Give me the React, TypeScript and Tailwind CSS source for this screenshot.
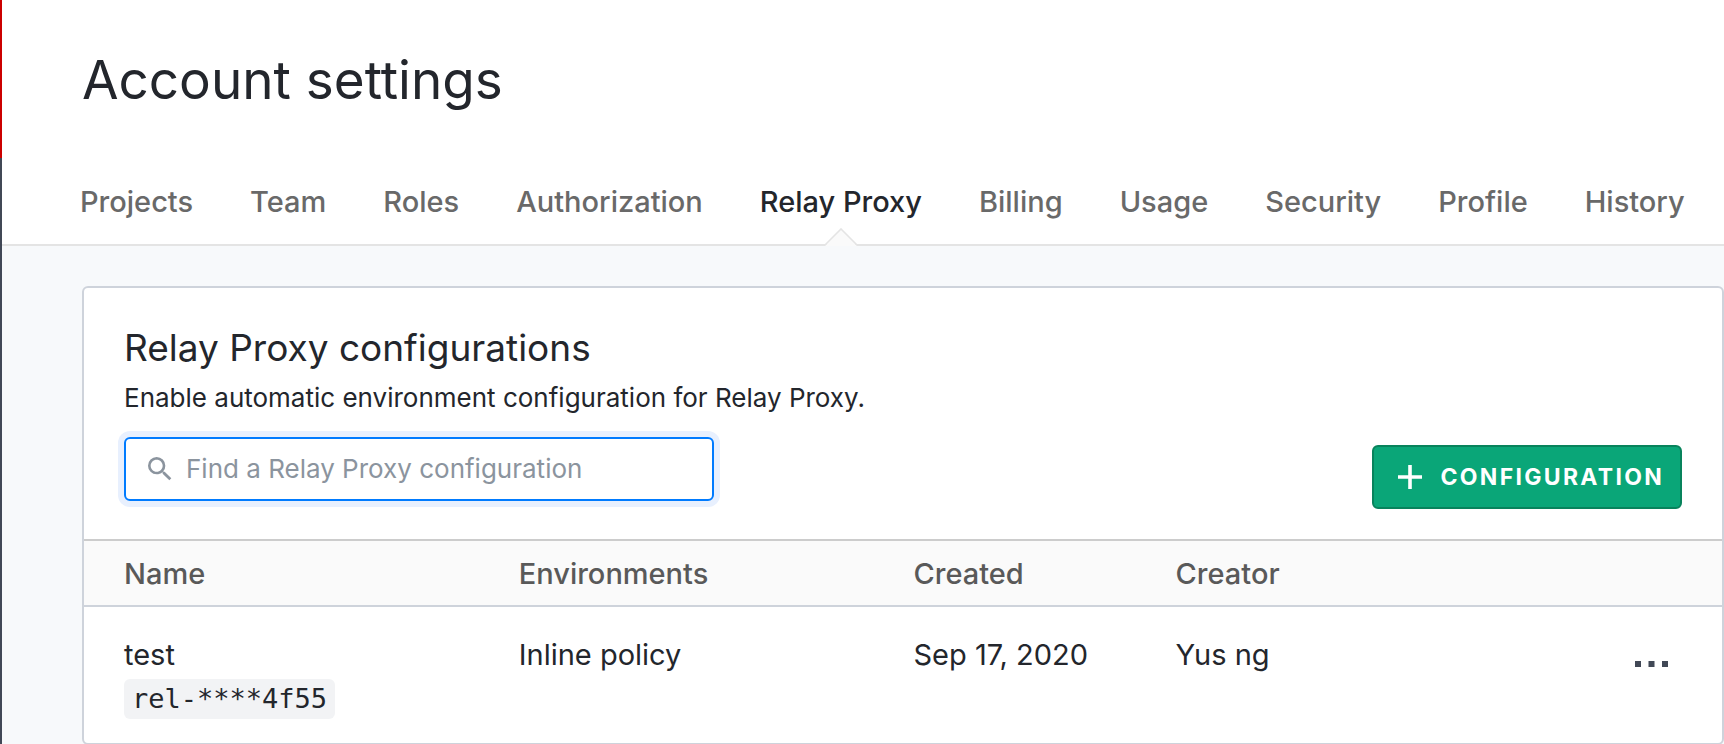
import { MdSearch } from "react-icons/md";

const tabs = [
  "Projects",
  "Team",
  "Roles",
  "Authorization",
  "Relay Proxy",
  "Billing",
  "Usage",
  "Security",
  "Profile",
  "History",
];

const configurations = [
  {
    name: "test",
    token: "rel-****4f55",
    environments: "Inline policy",
    created: "Sep 17, 2020",
    creator: "Yus ng",
  },
];

function Tab({ label, active }: { label: string; active: boolean }) {
  return (
    <li className="relative pb-6">
      <a
        href="#"
        aria-current={active ? "page" : undefined}
        className={
          active
            ? "block font-medium text-[#23262c]"
            : "block font-medium text-[#696969]"
        }
      >
        {label}
      </a>
      {active && (
        <svg
          viewBox="0 0 34 18"
          className="absolute -bottom-0.5 left-1/2 h-[18px] w-[34px] -translate-x-1/2"
          aria-hidden="true"
        >
          <path d="M1 18 17 1.5 33 18Z" fill="#fafafa" />
          <path d="M1 17 17 1 33 17" fill="none" stroke="#e4e4e4" strokeWidth="1.6" />
        </svg>
      )}
    </li>
  );
}

export default function App() {
  return (
    <div className="flex min-h-screen bg-[#f7f9fb] font-['Inter',sans-serif] text-[#23262c]">
      <div className="flex w-0.5 shrink-0 flex-col">
        <div className="h-[158px] bg-[#cc0000]" />
        <div className="grow bg-[#414856]" />
      </div>

      <div className="min-w-0 grow">
        <header className="border-b-2 border-[#e4e4e4] bg-white pt-12">
          <h1 className="pl-20 text-[53px] leading-16">Account settings</h1>
          <nav className="pt-18 pl-[78px]">
            <ul className="flex gap-[57px] text-[29px] leading-9 whitespace-nowrap">
              {tabs.map((label) => (
                <Tab key={label} label={label} active={label === "Relay Proxy"} />
              ))}
            </ul>
          </nav>
        </header>

        <main className="pt-10 pl-20">
          <section className="rounded-md border-2 border-[#ced3db] bg-white">
            <div className="px-10 pt-9 pb-[30px]">
              <h2 className="text-[37px] leading-12">Relay Proxy configurations</h2>
              <p className="pt-2 text-[26px] leading-9">
                Enable automatic environment configuration for Relay Proxy.
              </p>
              <div className="flex items-start justify-between pt-[21px]">
                <label className="flex h-16 w-[590px] items-center gap-2.5 rounded-md border-2 border-[#007bff] bg-white px-[18px] ring-6 ring-[#e8f0fe]">
                  <MdSearch className="size-8 shrink-0 text-[#8b949e]" aria-hidden="true" />
                  <input
                    type="text"
                    aria-label="Find a Relay Proxy configuration"
                    placeholder="Find a Relay Proxy configuration"
                    className="min-w-0 grow bg-transparent text-[26px] leading-9 outline-none placeholder:text-[#8b949e]"
                  />
                </label>
                <button
                  type="button"
                  className="mt-2 flex h-16 items-center gap-[18px] rounded-md border-2 border-[#08835c] bg-[#0aa678] pr-4 pl-6 text-[23px] leading-8 font-bold tracking-widest text-white"
                >
                  <svg viewBox="0 0 24 24" className="size-6" aria-hidden="true">
                    <path d="M12 0v24M0 12h24" stroke="currentColor" strokeWidth="3.6" />
                  </svg>
                  CONFIGURATION
                </button>
              </div>
            </div>

            <table className="w-full table-fixed text-left text-[29px] leading-9">
              <colgroup>
                <col className="w-[24.1%]" />
                <col className="w-[24.1%]" />
                <col className="w-[16%]" />
                <col />
                <col className="w-[10%]" />
              </colgroup>
              <thead>
                <tr className="border-t-2 border-b-2 border-t-[#cccccc] border-b-[#ced3db] bg-[#fafafa] text-[#595959]">
                  <th className="pt-[15px] pb-[13px] pl-10 font-medium">Name</th>
                  <th className="pt-[15px] pb-[13px] pl-10 font-medium">Environments</th>
                  <th className="pt-[15px] pb-[13px] pl-10 font-medium">Created</th>
                  <th className="pt-[15px] pb-[13px] pl-10 font-medium">Creator</th>
                  <th aria-label="Actions" />
                </tr>
              </thead>
              <tbody>
                {configurations.map((item) => (
                  <tr key={item.token} className="align-top">
                    <td className="pt-[30px] pb-6 pl-10">
                      <div>{item.name}</div>
                      <code className="mt-1.5 block w-fit rounded-md bg-[#f2f3f5] px-2 font-['DejaVu_Sans_Mono',monospace] text-[27px] leading-10">
                        {item.token}
                      </code>
                    </td>
                    <td className="pt-[30px] pl-10">{item.environments}</td>
                    <td className="pt-[30px] pl-10">{item.created}</td>
                    <td className="pt-[30px] pl-10">{item.creator}</td>
                    <td className="pt-[30px] pr-[54px] text-right">
                      <button type="button" aria-label="More actions" className="pt-[18px] align-top">
                        <svg viewBox="0 0 33 12" className="h-3 w-[33px] text-[#414856]" aria-hidden="true">
                          <path d="M0 6h6v6H0zM13.5 6h6v6h-6zM27 6h6v6h-6z" fill="currentColor" />
                        </svg>
                      </button>
                    </td>
                  </tr>
                ))}
              </tbody>
            </table>
          </section>
        </main>
      </div>
    </div>
  );
}
